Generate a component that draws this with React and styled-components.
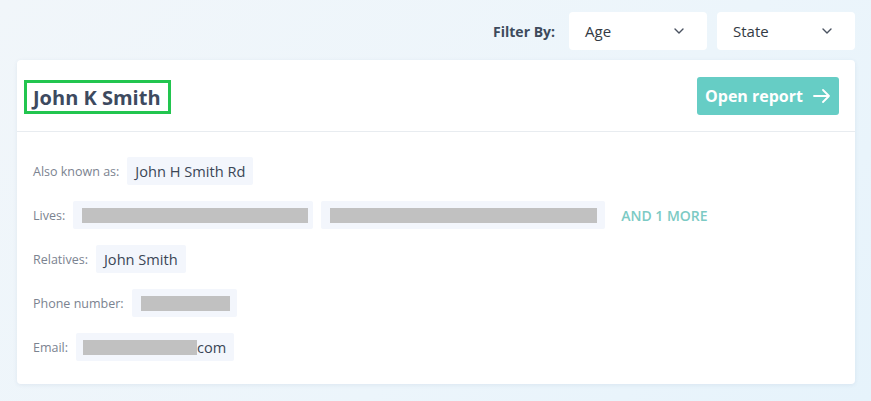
import React from "react";
import styled, { createGlobalStyle } from "styled-components";

const Global = createGlobalStyle`
  html, body { margin: 0; padding: 0; }
  body {
    font-family: "Open Sans", "Noto Sans", sans-serif;
    background: linear-gradient(135deg, #f1f6fa 0%, #ecf5fb 60%, #e6f3fb 100%);
    min-height: 401px;
  }
`;

const Page = styled.div`
  padding: 12px 16px 17px 17px;
  box-sizing: border-box;
  width: 871px;
`;

const FilterBar = styled.div`
  display: flex;
  justify-content: flex-end;
  align-items: center;
  gap: 10px;
  height: 38px;
`;

const FilterLabel = styled.span`
  font-size: 14px;
  font-weight: 700;
  color: #3d4a5c;
  margin-right: 4px;
`;

const Select = styled.div`
  width: 138px;
  height: 38px;
  box-sizing: border-box;
  background: #fff;
  border-radius: 4px;
  display: flex;
  align-items: center;
  justify-content: space-between;
  padding: 0 23px 0 16px;
  font-size: 15px;
  color: #333a44;
`;

const Card = styled.div`
  margin-top: 10px;
  background: #fff;
  border-radius: 4px;
  box-shadow: 0 1px 4px rgba(40, 70, 110, 0.08);
`;

const Header = styled.div`
  height: 72px;
  box-sizing: border-box;
  border-bottom: 1px solid #e8ecf0;
  display: flex;
  align-items: flex-start;
  justify-content: space-between;
  padding: 17px 16px 0 7px;
`;

const NameBox = styled.div`
  border: 3px solid #22c54f;
  height: 34px;
  width: 147px;
  box-sizing: border-box;
  display: flex;
  align-items: center;
  padding: 0 0 0 6px;
  margin-top: 3px;
  font-size: 20px;
  font-weight: 700;
  color: #3d4a5f;
`;

const OpenButton = styled.button`
  height: 38px;
  width: 142px;
  border: none;
  border-radius: 3px;
  background: #66cdc5;
  color: #fff;
  font-family: inherit;
  font-size: 16px;
  font-weight: 700;
  display: flex;
  align-items: center;
  justify-content: center;
  gap: 10px;
  padding: 0;
  cursor: pointer;
`;

const Body = styled.div`
  padding: 25px 16px 23px 16px;
  display: flex;
  flex-direction: column;
  gap: 16px;
`;

const Row = styled.div`
  display: flex;
  align-items: center;
  height: 28px;
  gap: 8px;
`;

const Label = styled.span`
  font-size: 12.5px;
  color: #7b8390;
`;

const Chip = styled.div`
  height: 28px;
  box-sizing: border-box;
  background: #f3f6fc;
  border-radius: 2px;
  display: flex;
  align-items: center;
  padding: 0 ${(p) => p.$pr ?? 8}px 0 ${(p) => p.$pl ?? 8}px;
  font-size: 14.6px;
  color: #3b4656;
`;

const Redact = styled.span`
  display: block;
  height: 15px;
  background: #c1c1c1;
`;

const More = styled.span`
  margin-left: 8px;
  font-size: 14px;
  font-weight: 600;
  color: #7ccac4;
`;

const Chevron = () => (
  <svg width="10" height="6" viewBox="0 0 10 6" fill="none">
    <path d="M1 1l4 4 4-4" stroke="#4a5260" strokeWidth="1.4" strokeLinecap="round" strokeLinejoin="round" />
  </svg>
);

const Arrow = () => (
  <svg width="18" height="14" viewBox="0 0 18 14" fill="none">
    <path d="M1 7h15M10 1l6 6-6 6" stroke="#fff" strokeWidth="1.8" strokeLinecap="round" strokeLinejoin="round" />
  </svg>
);

export default function App() {
  return (
    <>
      <Global />
      <Page>
        <FilterBar>
          <FilterLabel>Filter By:</FilterLabel>
          <Select>
            Age <Chevron />
          </Select>
          <Select>
            State <Chevron />
          </Select>
        </FilterBar>
        <Card>
          <Header>
            <NameBox>John K Smith</NameBox>
            <OpenButton>
              Open report <Arrow />
            </OpenButton>
          </Header>
          <Body>
            <Row>
              <Label>Also known as:</Label>
              <Chip>John H Smith Rd</Chip>
            </Row>
            <Row>
              <Label>Lives:</Label>
              <Chip $pl={9} $pr={5}>
                <Redact style={{ width: 226 }} />
              </Chip>
              <Chip $pl={9} $pr={8}>
                <Redact style={{ width: 267 }} />
              </Chip>
              <More>AND 1 MORE</More>
            </Row>
            <Row>
              <Label>Relatives:</Label>
              <Chip>John Smith</Chip>
            </Row>
            <Row>
              <Label>Phone number:</Label>
              <Chip $pl={9} $pr={7}>
                <Redact style={{ width: 89 }} />
              </Chip>
            </Row>
            <Row>
              <Label>Email:</Label>
              <Chip $pl={7} $pr={8}>
                <Redact style={{ width: 114 }} />
                com
              </Chip>
            </Row>
          </Body>
        </Card>
      </Page>
    </>
  );
}
